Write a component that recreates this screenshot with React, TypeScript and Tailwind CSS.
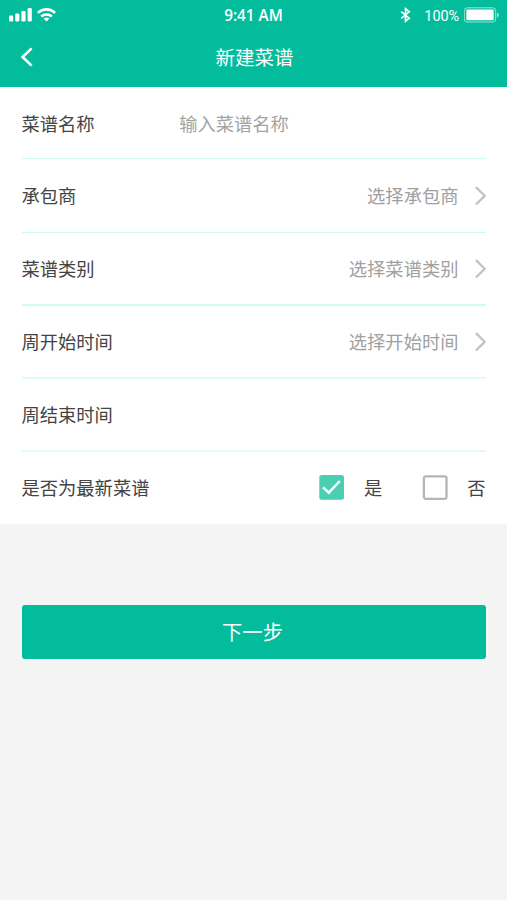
import { useState } from 'react';

interface FormRowProps {
  label: string;
  className: string;
  children?: React.ReactNode;
}

function StatusBar() {
  return (
    <div className="relative flex h-[30px] items-center justify-between pl-[9px] pr-[7px]">
      <div className="flex items-center gap-[4px]">
        <svg width="24" height="14" viewBox="0 0 24 14" fill="currentColor">
          <rect x="0" y="7.6" width="4.2" height="5.9" rx="1.3" />
          <rect x="6.2" y="5.6" width="4.2" height="7.9" rx="1.3" />
          <rect x="12.4" y="3" width="4.2" height="10.5" rx="1.3" />
          <rect x="18.6" y="0" width="4.2" height="13.5" rx="1.3" />
        </svg>
        <svg width="19" height="14" viewBox="0 0 19 14" fill="none" stroke="currentColor" strokeWidth="2.7">
          <path d="M0.9 4.9C5.7 0.3 13.3 0.3 18.1 4.9" />
          <path d="M4.2 8.6C7.2 5.8 11.8 5.8 14.8 8.6" />
          <path d="M9.5 13.5L6.7 10.7C8.3 9.2 10.7 9.2 12.3 10.7Z" fill="currentColor" stroke="none" />
        </svg>
      </div>
      <span className="absolute inset-x-0 top-[5px] text-center font-['Open_Sans',sans-serif] text-[15.3px] font-semibold leading-5">
        9:41 AM
      </span>
      <div className="flex items-center">
        <svg className="mb-px mr-[13px]" width="11" height="16" viewBox="0 0 11 16" fill="none" stroke="currentColor" strokeWidth="1.7">
          <path d="M1.2 4.6L9.2 11.2L5.5 14.3V1.7L9.2 4.8L1.2 11.4" />
        </svg>
        <span className="mr-[5px] mt-[3px] font-[Roboto,sans-serif] text-[14.5px] leading-5 tracking-[-0.1px]">100%</span>
        <svg width="36" height="16" viewBox="0 0 36 16" fill="none">
          <rect x="0.3" y="0.8" width="31.4" height="14.2" rx="3" stroke="currentColor" strokeOpacity="0.6" strokeWidth="1" />
          <rect x="2.3" y="2.6" width="27.4" height="10.6" rx="1" fill="currentColor" />
          <path d="M33 5.4C35.4 6.4 35.4 9.6 33 10.6Z" fill="currentColor" fillOpacity="0.6" />
        </svg>
      </div>
    </div>
  );
}

function FormRow({ label, className, children }: FormRowProps) {
  return (
    <div className={`flex items-center justify-between text-[18.3px] ${className}`}>
      <span className="text-[#444]">{label}</span>
      {children}
    </div>
  );
}

function Picker({ placeholder }: { placeholder: string }) {
  return (
    <button className="flex items-center gap-[16px] text-[#a0a0a0]">
      {placeholder}
      <svg width="11" height="20" viewBox="0 0 11 20" fill="none" stroke="#c2c2c2" strokeWidth="2.3">
        <path d="M0.9 1.1L9.7 9.8L0.9 18.5" />
      </svg>
    </button>
  );
}

function Option({ label, checked, onClick }: { label: string; checked: boolean; onClick: () => void }) {
  return (
    <button className="flex items-center gap-[19px] text-[#444]" onClick={onClick}>
      <svg width="26" height="26" viewBox="0 0 26 26" fill="none">
        {checked ? (
          <>
            <rect x="0.3" y="0.1" width="24.7" height="24.7" rx="2.5" fill="#4bceb2" />
            <path d="M4 12.3L9.8 17.7L20.8 6" stroke="#fff" strokeWidth="2.5" />
          </>
        ) : (
          <rect x="1.9" y="1.3" width="22.6" height="22.5" rx="2" stroke="#b5b5b5" strokeWidth="2.3" />
        )}
      </svg>
      {label}
    </button>
  );
}

export default function App() {
  const [isLatest, setIsLatest] = useState(true);

  return (
    <div className="min-h-screen bg-[#f4f4f4] font-['Noto_Sans_CJK_SC',sans-serif]">
      <header className="h-[87px] bg-[#02bc9c] text-white">
        <StatusBar />
        <div className="flex h-[55px] items-center pl-[20px] pr-[31px]">
          <svg className="-mt-px" width="13" height="20" viewBox="0 0 13 20" fill="none" stroke="currentColor" strokeWidth="2.6">
            <path d="M11.6 1.4L2.6 10L11.6 18.6" />
          </svg>
          <h1 className="flex-1 pb-[2px] text-center text-[19.5px] leading-7">新建菜谱</h1>
        </div>
      </header>

      <main>
        <section className="bg-white px-[21.5px]">
          <FormRow label="菜谱名称" className="h-[72px] border-b border-[#cffbf0] pt-[2px]">
            <input
              className="ml-[84.5px] min-w-0 flex-1 outline-none placeholder:text-[#a3a3a3]"
              placeholder="输入菜谱名称"
            />
          </FormRow>
          <FormRow label="承包商" className="h-[74px] border-b border-[#cffbf0]">
            <Picker placeholder="选择承包商" />
          </FormRow>
          <FormRow label="菜谱类别" className="h-[73px] border-b-2 border-[#d0fcf0]">
            <Picker placeholder="选择菜谱类别" />
          </FormRow>
          <FormRow label="周开始时间" className="h-[73px] border-b-2 border-[#defdf5] pt-px">
            <Picker placeholder="选择开始时间" />
          </FormRow>
          <FormRow label="周结束时间" className="h-[73px] border-b-2 border-[#defdf5]" />
          <FormRow label="是否为最新菜谱" className="h-[72px]">
            <div className="flex gap-[40px]">
              <Option label="是" checked={isLatest} onClick={() => setIsLatest(true)} />
              <Option label="否" checked={!isLatest} onClick={() => setIsLatest(false)} />
            </div>
          </FormRow>
        </section>

        <div className="px-[21.5px] pt-[81.4px]">
          <button className="h-[54px] w-full rounded-[3px] bg-[#02bc9c] pb-[2px] pr-[2px] text-[20.3px] text-white">
            下一步
          </button>
        </div>
      </main>
    </div>
  );
}
